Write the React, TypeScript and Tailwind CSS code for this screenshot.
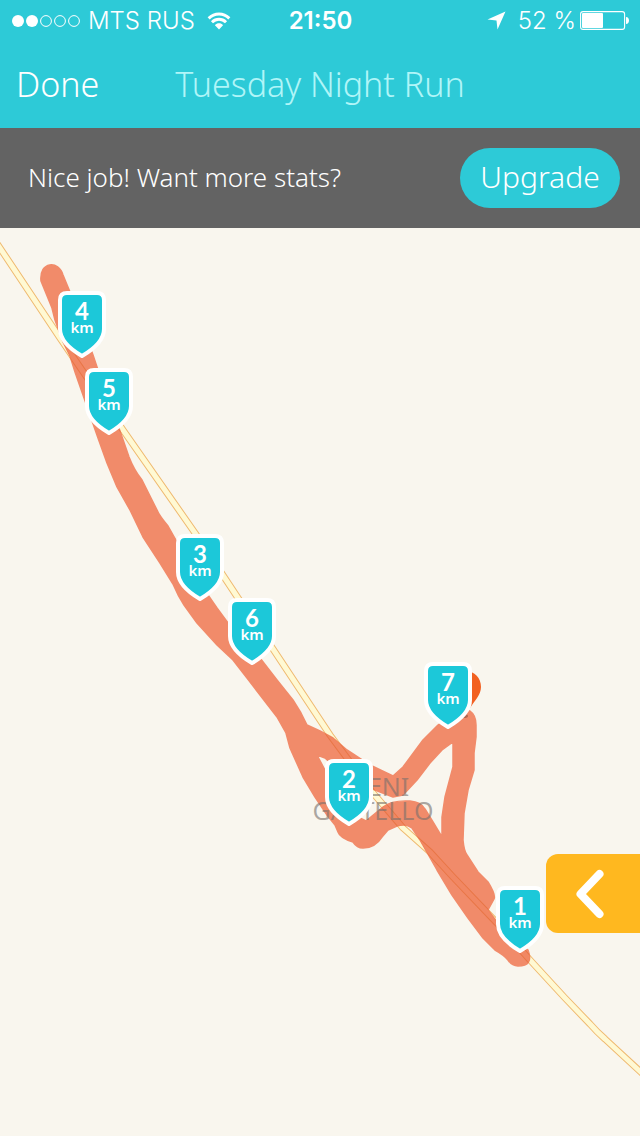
interface KmMarker {
  km: number
  x: number
  y: number
}

// Positions on the map canvas, measured to the top centre of each shield
const MARKERS: KmMarker[] = [
  { km: 4, x: 82, y: 63 },
  { km: 5, x: 109, y: 140 },
  { km: 3, x: 200, y: 306 },
  { km: 6, x: 252, y: 370 },
  { km: 7, x: 448, y: 434 },
  { km: 2, x: 349, y: 531 },
  { km: 1, x: 520, y: 658 },
]

const ROAD_PATH =
  'M-4 14 L60 110 L123 202 L195 305 L238 370 L273 421 L330 507 L373 565 L403 600 L430 624 L453 649 L497 695 L530 732 L565 770 L590 796 Q597 804 605 811 L644 847'

const ROUTE_PATH = `M41 53 C39 33 59 32 63 47 L70 64 L82 97 L93 127 L98 142 L109 175 L120 203 L129 229 Q134 242 142 252
  L151 270 L159 286 Q162 291 168 298 L177 314 L193 343 L208 367 L217 380 L228 395 L260 430 L277 452 L293 472 L301 485 L307 497
  L320 503 L333 510 L347 522 L370 537 L393 548 L403 539 L423 512 L438 497 L455 485 Q462 481 470 483 Q476 487 476 497
  L476 509 L474 525 L474 542 L468 562 L464 585 L463 612 Q464 623 467 627 L478 644 L488 654 Q496 667 494 671
  L488 682 L497 694 L515 712 L528 722 Q534 738 518 738 Q512 738 508 732 Q504 727 495 722 L483 710 L468 690
  L452 667 L437 642 L420 612 L412 600 Q406 595 397 598 L388 602 L382 609 Q375 620 363 620 Q357 620 353 614
  Q340 610 338 604 L335 597 L327 587 L315 569 L303 549 L290 520 L286 505 L277 489 L260 467 L247 450 L233 432
  L217 417 L197 395 L184 377 Q178 368 173 356 L160 335 L143 309 L130 282 L117 259 L107 235 L98 210 L83 167 L75 144
  L70 128 L63 114 L55 92 L52 80 Z
  M317 527 L325 530 L345 548 L375 562 L393 569 L403 567 L417 552 L430 535 L442 522 L453 514 L453 539 L445 569
  L442 589 L442 609 L433 594 L425 581 Q421 574 410 573 Q392 572 383 579 L366 593 L360 590 L338 566 L327 546 Z`

function StatusBar() {
  return (
    <div className="grid h-10 grid-cols-[1fr_auto_1fr] items-center pt-px pr-[11px] pl-3 font-['Inter',sans-serif] text-2xl text-white">
      <div className="flex items-center gap-2">
        <svg width="68" height="12" viewBox="0 0 68 12" aria-hidden="true">
          <circle cx="6" cy="6" r="6" fill="currentColor" />
          <circle cx="20" cy="6" r="6" fill="currentColor" />
          <circle cx="34" cy="6" r="5.4" fill="none" stroke="currentColor" />
          <circle cx="48" cy="6" r="5.4" fill="none" stroke="currentColor" />
          <circle cx="62" cy="6" r="5.4" fill="none" stroke="currentColor" />
        </svg>
        <span>MTS RUS</span>
        <svg className="ml-1" width="24" height="18" viewBox="0 0 26 19" aria-hidden="true">
          <g fill="none" stroke="currentColor" strokeWidth="3.2">
            <path d="M1.8 6.6C8.2.3 17.8.3 24.2 6.6" />
            <path d="M5.4 10.8C9.8 6.6 16.2 6.6 20.6 10.8" />
          </g>
          <path d="M8.6 14C11 11.4 15 11.4 17.4 14L13 18.8Z" fill="currentColor" />
        </svg>
      </div>
      <span className="font-semibold">21:50</span>
      <div className="flex items-center justify-end">
        <svg className="mr-3" width="19" height="19" viewBox="0 0 19 19" aria-hidden="true">
          <path d="M18.5.5L10.5 18.5L9.5 9.5L.5 8.5Z" fill="currentColor" />
        </svg>
        <span>52 %</span>
        <svg className="ml-1" width="49" height="19" viewBox="0 0 49 19" aria-hidden="true">
          <rect x=".6" y=".6" width="44" height="17.8" rx="2.5" fill="none" stroke="currentColor" strokeWidth="1.1" />
          <rect x="2" y="2" width="21" height="15" rx="1" fill="currentColor" />
          <path d="M46 6C50 6 50 13 46 13Z" fill="currentColor" />
        </svg>
      </div>
    </div>
  )
}

function Shield({ km, x, y }: KmMarker) {
  return (
    <div
      className="absolute flex h-[68px] w-12 -translate-x-1/2 flex-col items-center pt-2 text-white"
      style={{ left: x, top: y }}
    >
      <svg className="absolute inset-0" width="48" height="68" viewBox="0 0 48 68" aria-hidden="true">
        <path
          d="M9 2H39Q46 2 46 9V38C46 49 36 58 24 65C12 58 2 49 2 38V9Q2 2 9 2Z"
          fill="#1cc8d9"
          stroke="#fff"
          strokeWidth="4"
          strokeLinejoin="round"
        />
      </svg>
      <span className="relative font-['Lato',sans-serif] text-2xl leading-6 font-bold">{km}</span>
      <span className="relative text-[15px] leading-2 font-semibold">km</span>
    </div>
  )
}

function RouteMap() {
  return (
    <main className="relative min-h-[800px] flex-1 overflow-hidden bg-[#f9f6ee]">
      <svg className="absolute top-0 left-0" width="640" height="908" viewBox="0 0 640 908" role="img" aria-label="Run route">
        <defs>
          <clipPath id="route">
            <path d={ROUTE_PATH} clipRule="evenodd" />
          </clipPath>
        </defs>
        <path d={ROAD_PATH} fill="none" stroke="#efb96f" strokeWidth="7" strokeLinejoin="round" />
        <path d={ROAD_PATH} fill="none" stroke="#fff9d3" strokeWidth="5" strokeLinejoin="round" />
        <path
          d={ROUTE_PATH}
          fill="#f07a55"
          stroke="#f07a55"
          strokeWidth="1.5"
          strokeLinejoin="round"
          fillRule="evenodd"
          opacity=".86"
        />
        <g clipPath="url(#route)" fill="none">
          <path d={ROAD_PATH} stroke="#e5713f" strokeOpacity=".7" strokeWidth="7" />
          <path d={ROAD_PATH} stroke="#f18763" strokeWidth="5" />
        </g>
        {/* finish pin */}
        <ellipse cx="464" cy="488" rx="4" ry="2" fill="#7a4434" fillOpacity=".5" />
        <path d="M465 443C475 443 481 450 481 459C481 467 475 472 470 480L465 486C460 477 449 469 449 459C449 450 455 443 465 443Z" fill="#f26122" />
      </svg>

      <p className="absolute top-[546px] left-[293px] w-40 text-center text-[25px] leading-6 font-normal text-[#77706c]/60">
        IMENI
        <br />
        GASTELLO
      </p>

      {MARKERS.map((marker) => (
        <Shield key={marker.km} {...marker} />
      ))}

      <button
        type="button"
        aria-label="Show run details"
        className="absolute top-[626px] right-0 flex h-[79px] w-[94px] items-center rounded-l-xl bg-[#ffb81f] pl-[30px] text-white"
      >
        <svg width="28" height="50" viewBox="0 0 28 50" aria-hidden="true">
          <path d="M23.5 5L4.5 25L23.5 45" fill="none" stroke="currentColor" strokeWidth="8" strokeLinecap="round" strokeLinejoin="round" />
        </svg>
      </button>
    </main>
  )
}

export default function App() {
  return (
    <div className="flex min-h-screen flex-col font-['Noto_Sans',sans-serif] font-light">
      <header className="bg-[#2dcad7]">
        <StatusBar />
        <nav className="grid h-[88px] grid-cols-[1fr_auto_1fr] items-center px-4 text-[34px]">
          <button type="button" className="justify-self-start text-white">
            Done
          </button>
          <h1 className="text-[#b0f5f8]">Tuesday Night Run</h1>
        </nav>
      </header>

      <section className="flex h-[100px] items-center justify-between bg-[#636363] pr-5 pl-7 text-white">
        <p className="pb-0.5 text-[26px]">Nice job! Want more stats?</p>
        <button type="button" className="h-[60px] w-40 rounded-full bg-[#2dcad7] pb-1 text-[30px]">
          Upgrade
        </button>
      </section>

      <RouteMap />
    </div>
  )
}
